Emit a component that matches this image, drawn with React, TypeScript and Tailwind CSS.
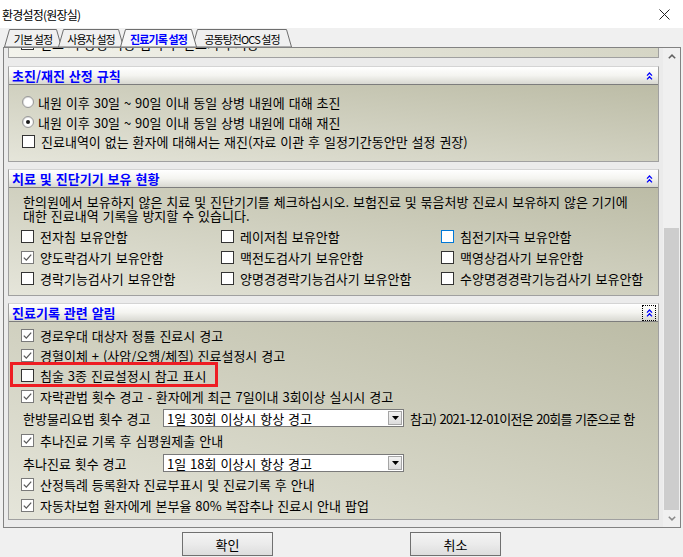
import React from 'react';

const CheckBox = ({ checked = false, hover = false }: { checked?: boolean; hover?: boolean }) => (
  <span
    className={`flex w-[13px] h-[13px] shrink-0 items-center justify-center bg-white border ${
      hover ? 'border-[#0078d7]' : checked ? 'border-[#7a7a7a]' : 'border-[#333333]'
    }`}
  >
    {checked && (
      <svg width="11" height="11" viewBox="0 0 11 11">
        <path d="M1.8 5.6 L4.3 8.1 L9.2 2.6" fill="none" stroke="#5a5a5a" strokeWidth="1.3" />
      </svg>
    )}
  </span>
);

const Radio = ({ checked = false }: { checked?: boolean }) => (
  <span className="flex w-[12px] h-[12px] shrink-0 items-center justify-center rounded-full border border-[#9a9a9a] bg-linear-to-br from-[#d4d4d4] to-[#ffffff]">
    <span className="flex w-[8px] h-[8px] items-center justify-center rounded-full bg-white">
      {checked && <span className="w-[4px] h-[4px] rounded-full bg-[#1a1a1a]" />}
    </span>
  </span>
);

const CheckRow = ({
  label,
  checked = false,
  hover = false,
  className = ''
}: {
  label: string;
  checked?: boolean;
  hover?: boolean;
  className?: string;
}) => (
  <div className={`flex items-center gap-[6px] whitespace-nowrap ${className}`}>
    <CheckBox checked={checked} hover={hover} />
    <span>{label}</span>
  </div>
);

const Chevron = ({ focus = false }: { focus?: boolean }) => (
  <span
    className={`flex w-[14px] h-[16px] items-center justify-center border border-dotted ${
      focus ? 'border-black' : 'border-transparent'
    }`}
  >
    <svg width="7" height="8" viewBox="0 0 7 8">
      <path d="M1 3.6 L3.5 1 L6 3.6 M1 7.4 L3.5 4.8 L6 7.4" fill="none" stroke="#0000ff" strokeWidth="1.3" />
    </svg>
  </span>
);

const Panel = ({
  title,
  focus = false,
  bodyClass,
  children
}: {
  title: string;
  focus?: boolean;
  bodyClass: string;
  children: React.ReactNode;
}) => (
  <div className="border border-[#a0a0a0] border-t-[#d4d4d4]">
    <div className="h-[18px] flex items-center justify-between pl-[3px] pr-[2px] border-b border-[#7d7d7d] bg-linear-to-b from-[#ffffff] via-[#f4f4f0] to-[#d8d8d1]">
      <span className="text-[13px] leading-[15px] font-bold text-[#0000ff]">{title}</span>
      <Chevron focus={focus} />
    </div>
    <div className={`bg-linear-to-tr from-[#e5e5da] to-[#bcbca6] ${bodyClass}`}>{children}</div>
  </div>
);

const Combo = ({ value }: { value: string }) => (
  <div className="w-[241px] h-[18px] shrink-0 flex items-center bg-white border border-[#7a7a7a]">
    <span className="flex-1 pl-[3px] whitespace-nowrap">{value}</span>
    <span className="flex w-[14px] h-[14px] mr-[1px] items-center justify-center bg-linear-to-b from-[#f2f2f2] to-[#dcdcdc] border border-[#a5a5a5]">
      <svg width="7" height="4" viewBox="0 0 7 4">
        <path d="M0 0 L7 0 L3.5 4 Z" fill="#000" />
      </svg>
    </span>
  </div>
);

const Tab = ({ w, label, active = false, className }: { w: number; label: string; active?: boolean; className: string }) => (
  <div className={`relative h-[19px] flex items-center justify-center ${active ? 'z-10' : ''} ${className}`}>
    <svg className="absolute inset-0" width={w} height="19" viewBox={`0 0 ${w} 19`}>
      <polygon
        points={`0.5,19 5.5,1.5 ${w - 5.5},1.5 ${w - 0.5},19`}
        fill={active ? '#f7f7f7' : '#f0f0f0'}
        stroke="#6e6e6e"
        strokeWidth="1"
      />
    </svg>
    <span
      className={`relative text-[11px] tracking-[-0.9px] leading-[12px] pt-[2px] ${
        active ? 'font-bold text-[#0000ff]' : 'text-black'
      }`}
    >
      {label}
    </span>
  </div>
);

const Button = ({ label }: { label: string }) => (
  <button className="w-[91px] h-[24px] flex items-center justify-center border border-[#707070] bg-linear-to-b from-[#f3f3f3] via-[#ebebeb] to-[#dddddd] text-[13px] text-black">
    {label}
  </button>
);

export default function App() {
  return (
    <div className="w-[683px] h-[557px] overflow-hidden bg-[#f0f0f0] flex flex-col font-['Noto_Sans_CJK_KR','Liberation_Sans',sans-serif] text-[13px] leading-[15px] text-black">
      {/* title bar */}
      <div className="h-[28px] shrink-0 bg-white flex items-center justify-between pl-[2px] pr-[13px]">
        <span className="text-[12px] tracking-[-0.8px]">환경설정(원장실)</span>
        <svg width="11" height="11" viewBox="0 0 11 11">
          <path d="M0.5 0.5 L10.5 10.5 M10.5 0.5 L0.5 10.5" stroke="#222" strokeWidth="1" />
        </svg>
      </div>

      {/* tabs */}
      <div className="h-[19px] shrink-0 flex pl-[4px]">
        <Tab w={58} label="기본 설정" className="w-[58px]" />
        <Tab w={66} label="사용자 설정" className="w-[66px] -ml-[4px]" />
        <Tab w={77} label="진료기록 설정" active className="w-[77px] -ml-[4px]" />
        <Tab w={100} label="공동탕전OCS 설정" className="w-[100px] -ml-[5px]" />
      </div>

      {/* tab page frame */}
      <div className="ml-[3px] w-[678px] h-[481px] shrink-0 border border-[#828282] flex [word-spacing:1px]">
        <div className="w-[659px] overflow-hidden bg-[#ebebeb] px-[4px]">
          {/* panel scrolled mostly out of view */}
          <div className="border-x border-b border-[#a0a0a0] h-[10px] overflow-hidden bg-linear-to-r from-[#f3f3ec] to-[#d5d5c5]">
            <div className="h-[13px] -mt-[11px] flex items-center gap-[6px] pl-[12px] whitespace-nowrap">
              <CheckBox />
              <span>진료 시 상병 자동 입력 후 진료기록 저장</span>
            </div>
          </div>

          <div className="mt-[8px]">
            <Panel title="초진/재진 산정 규칙" bodyClass="h-[76px] pt-[7px]">
              <div className="h-[20px] flex items-center gap-[4px] pl-[13px] whitespace-nowrap">
                <Radio />
                <span>내원 이후 30일 ~ 90일 이내 동일 상병 내원에 대해 초진</span>
              </div>
              <div className="h-[20px] flex items-center gap-[4px] pl-[13px] whitespace-nowrap">
                <Radio checked />
                <span>내원 이후 30일 ~ 90일 이내 동일 상병 내원에 대해 재진</span>
              </div>
              <CheckRow
                className="h-[18px] pl-[13px] gap-[5px]"
                label="진료내역이 없는 환자에 대해서는 재진(자료 이관 후 일정기간동안만 설정 권장)"
              />
            </Panel>
          </div>

          <div className="mt-[7px]">
            <Panel title="치료 및 진단기기 보유 현황" bodyClass="h-[107px] pt-[6px]">
              <div className="pl-[14px] whitespace-nowrap">
                <div className="h-[14px] flex items-center">
                  한의원에서 보유하지 않은 치료 및 진단기기를 체크하십시오. 보험진료 및 묶음처방 진료시 보유하지 않은 기기에
                </div>
                <div className="h-[14px] flex items-center">대한 진료내역 기록을 방지할 수 있습니다.</div>
              </div>
              <div className="mt-[4px] pl-[12px] grid grid-cols-[200px_220px_1fr] auto-rows-[21px]">
                <CheckRow label="전자침 보유안함" />
                <CheckRow label="레이저침 보유안함" />
                <CheckRow label="침전기자극 보유안함" hover />
                <CheckRow label="양도락검사기 보유안함" checked />
                <CheckRow label="맥전도검사기 보유안함" />
                <CheckRow label="맥영상검사기 보유안함" />
                <CheckRow label="경락기능검사기 보유안함" />
                <CheckRow label="양명경경락기능검사기 보유안함" />
                <CheckRow label="수양명경경락기능검사기 보유안함" />
              </div>
            </Panel>
          </div>

          <div className="mt-[7px]">
            <Panel title="진료기록 관련 알림" focus bodyClass="h-[197px] pt-[3px]">
              <CheckRow className="h-[20px] pl-[12px]" checked label="경로우대 대상자 정률 진료시 경고" />
              <CheckRow className="h-[20px] pl-[12px]" checked label="경혈이체 + (사암/오행/체질) 진료설정시 경고" />
              <div className="relative">
                <CheckRow className="h-[21px] pl-[12px]" label="침술 3종 진료설정시 참고 표시" />
                <div className="absolute left-[1px] top-[-3px] w-[208px] h-[25px] border-[3px] border-[#ee1d23]" />
              </div>
              <CheckRow
                className="h-[21px] pl-[12px]"
                checked
                label="자락관법 횟수 경고 - 환자에게 최근 7일이내 3회이상 실시시 경고"
              />
              <div className="h-[22px] flex items-center pl-[14px] whitespace-nowrap">
                <span className="w-[140px] shrink-0">한방물리요법 횟수 경고</span>
                <Combo value="1일 30회 이상시 항상 경고" />
                <span className="ml-[6px] tracking-[-0.7px]">참고) 2021-12-01이전은 20회를 기준으로 함</span>
              </div>
              <CheckRow className="h-[23px] pl-[12px]" checked label="추나진료 기록 후 심평원제출 안내" />
              <div className="h-[22px] flex items-center pl-[14px] whitespace-nowrap">
                <span className="w-[140px] shrink-0">추나진료 횟수 경고</span>
                <Combo value="1일 18회 이상시 항상 경고" />
              </div>
              <CheckRow className="h-[21px] pl-[12px]" checked label="산정특례 등록환자 진료부표시 및 진료기록 후 안내" />
              <CheckRow className="h-[20px] pl-[12px]" checked label="자동차보험 환자에게 본부율 80% 복잡추나 진료시 안내 팝업" />
            </Panel>
          </div>
        </div>

        {/* scrollbar */}
        <div className="w-[17px] bg-[#f0f0f0] flex flex-col">
          <div className="h-[17px] flex items-center justify-center">
            <svg width="8" height="5" viewBox="0 0 8 5">
              <path d="M0.8 4.3 L4 1.1 L7.2 4.3" fill="none" stroke="#606060" strokeWidth="1.5" />
            </svg>
          </div>
          <div className="flex-1 flex flex-col pt-[163px] px-[1px]">
            <div className="flex-1 bg-[#cdcdcd]" />
          </div>
          <div className="h-[17px] flex items-center justify-center">
            <svg width="8" height="5" viewBox="0 0 8 5">
              <path d="M0.8 0.7 L4 3.9 L7.2 0.7" fill="none" stroke="#8a8a8a" strokeWidth="1.5" />
            </svg>
          </div>
        </div>
      </div>

      {/* buttons */}
      <div className="mt-[4px] flex justify-center gap-[137px]">
        <Button label="확인" />
        <Button label="취소" />
      </div>
    </div>
  );
}
